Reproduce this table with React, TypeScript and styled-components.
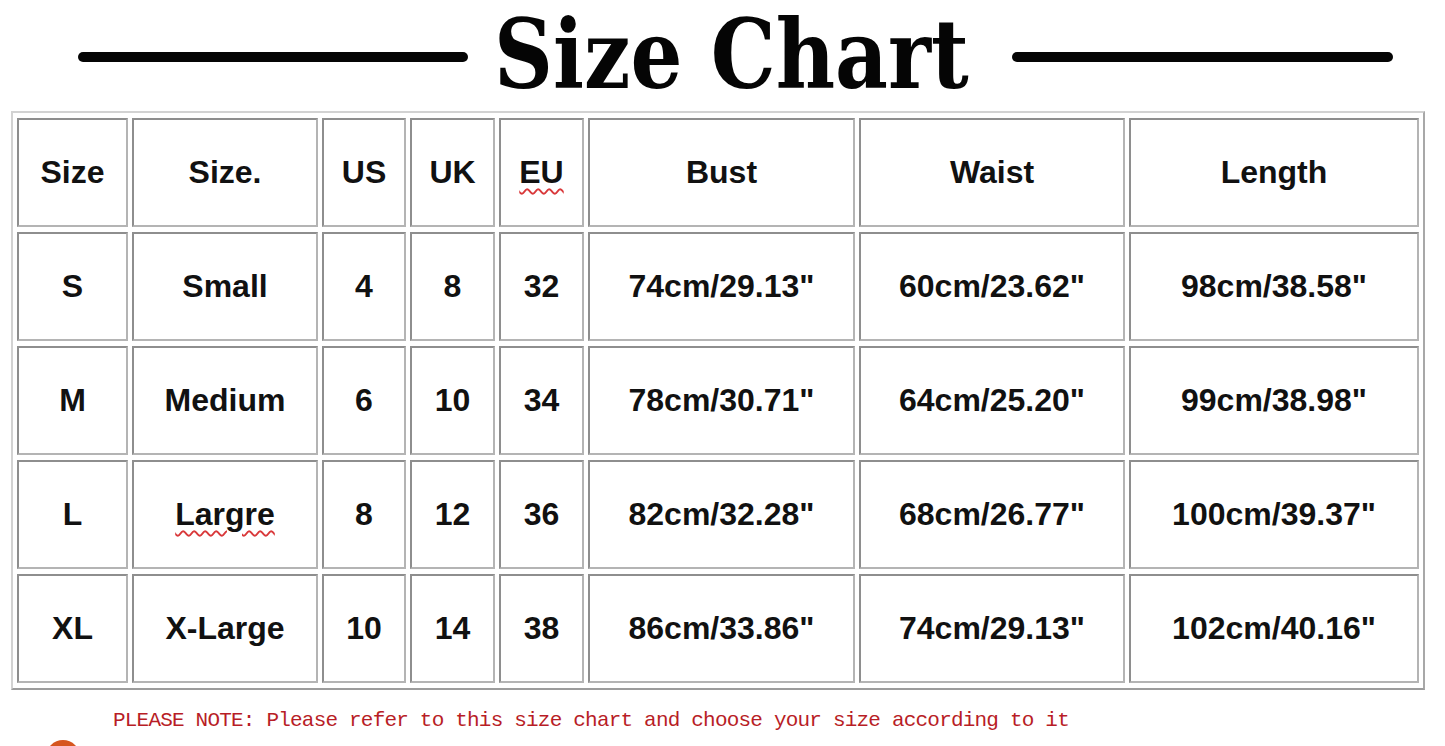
import styled, { createGlobalStyle } from 'styled-components';

const GlobalStyle = createGlobalStyle`
  *, *::before, *::after {
    box-sizing: border-box;
  }

  body {
    margin: 0;
    background: #ffffff;
    font-family: 'Liberation Sans', Arial, sans-serif;
    overflow: hidden;
  }
`;

const Page = styled.div`
  width: 1445px;
  height: 746px;
  overflow: hidden;
`;

const TitleRow = styled.div`
  display: flex;
  align-items: flex-start;
  height: 101px;
  padding-left: 78px;
`;

const Rule = styled.div<{ $width: number }>`
  width: ${(p) => p.$width}px;
  height: 10px;
  margin-top: 52px;
  background: #050505;
  border-radius: 5px;
`;

const Title = styled.h1`
  flex: none;
  width: 544px;
  margin: 0;
  padding-right: 18px;
  font-family: 'DejaVu Serif', 'Liberation Serif', serif;
  font-stretch: condensed;
  font-size: 95px;
  font-weight: 700;
  line-height: 1.164;
  text-align: center;
  color: #050505;
  white-space: nowrap;
  transform: scaleX(0.955);
`;

const Table = styled.table`
  margin: 10px 0 0 11px;
  width: 1413px;
  table-layout: fixed;
  border-collapse: separate;
  border-spacing: 4px 5px;
  border: 2px solid;
  border-color: #d2d2d2 #a8a8a8 #9c9c9c #d2d2d2;
`;

const Cell = styled.td<{ $width?: number }>`
  width: ${(p) => (p.$width ? `${p.$width}px` : 'auto')};
  height: 109px;
  padding: 0;
  border: 2px solid;
  border-color: #8e8e8e #b4b4b4 #b4b4b4 #8e8e8e;
  text-align: center;
  vertical-align: middle;
  font-size: 32px;
  font-weight: 700;
  color: #111111;
  white-space: nowrap;
`;

const HeadCell = styled(Cell).attrs({ as: 'th' })``;

const Misspelt = styled.span`
  text-decoration: underline wavy #d9383a;
  text-decoration-thickness: 1.5px;
  text-underline-offset: 5px;
`;

const Note = styled.p`
  margin: 20px 0 0 113px;
  font-family: 'Liberation Mono', 'Courier New', monospace;
  font-size: 21px;
  line-height: 22px;
  letter-spacing: -0.8px;
  color: #b81d26;
  white-space: nowrap;
`;

const Badge = styled.div`
  width: 34px;
  height: 34px;
  margin: 8px 0 0 46px;
  border-radius: 50%;
  background: #d6561f;
`;

const widths = [111, 186, 84, 85, 85, 267, 266, 290];

const header: React.ReactNode[] = [
  'Size',
  'Size.',
  'US',
  'UK',
  <Misspelt key="eu">EU</Misspelt>,
  'Bust',
  'Waist',
  'Length',
];

const rows: React.ReactNode[][] = [
  ['S', 'Small', '4', '8', '32', '74cm/29.13"', '60cm/23.62"', '98cm/38.58"'],
  ['M', 'Medium', '6', '10', '34', '78cm/30.71"', '64cm/25.20"', '99cm/38.98"'],
  ['L', <Misspelt key="lg">Largre</Misspelt>, '8', '12', '36', '82cm/32.28"', '68cm/26.77"', '100cm/39.37"'],
  ['XL', 'X-Large', '10', '14', '38', '86cm/33.86"', '74cm/29.13"', '102cm/40.16"'],
];

export default function App() {
  return (
    <Page>
      <GlobalStyle />
      <TitleRow>
        <Rule $width={390} />
        <Title>Size Chart</Title>
        <Rule $width={381} />
      </TitleRow>

      <Table>
        <thead>
          <tr>
            {header.map((h, i) => (
              <HeadCell key={i} $width={widths[i]}>
                {h}
              </HeadCell>
            ))}
          </tr>
        </thead>
        <tbody>
          {rows.map((row, r) => (
            <tr key={r}>
              {row.map((c, i) => (
                <Cell key={i}>{c}</Cell>
              ))}
            </tr>
          ))}
        </tbody>
      </Table>

      <Note>PLEASE NOTE: Please refer to this size chart and choose your size according to it</Note>
      <Badge />
    </Page>
  );
}
